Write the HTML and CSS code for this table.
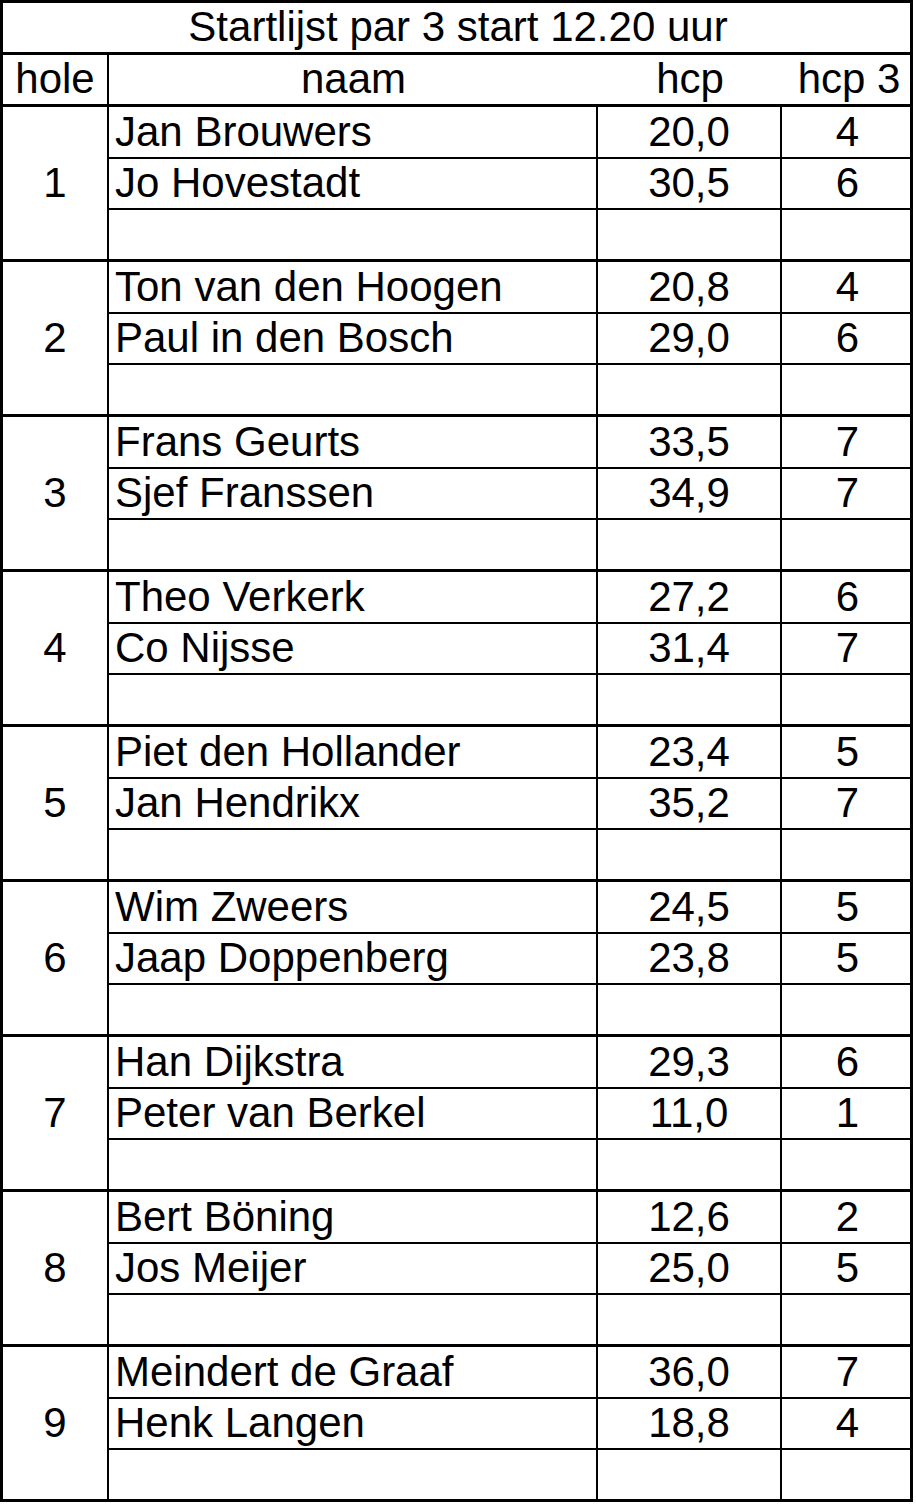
FILE: index.html
```html
<!DOCTYPE html>
<html lang="nl">
<head>
<meta charset="utf-8">
<title>Startlijst par 3</title>
<link rel="stylesheet" href="styles.css">
</head>
<body>
<div class="sheet">
  <div class="title"><span>Startlijst par 3 start 12.20 uur</span></div>
  <div class="head">
    <div class="hc hole-h">hole</div>
    <div class="hc">naam</div>
    <div class="hc">hcp</div>
    <div class="hc">hcp 3</div>
  </div>

  <div class="group">
    <div class="hole">1</div>
    <div class="c name r1">Jan Brouwers</div><div class="c num vr r1">20,0</div><div class="c num3 r1">4</div>
    <div class="c name r2">Jo Hovestadt</div><div class="c num vr r2">30,5</div><div class="c num3 r2">6</div>
    <div class="c name r3"></div><div class="c num vr r3"></div><div class="c num3 r3"></div>
  </div>

  <div class="group">
    <div class="hole">2</div>
    <div class="c name r1">Ton van den Hoogen</div><div class="c num vr r1">20,8</div><div class="c num3 r1">4</div>
    <div class="c name r2">Paul in den Bosch</div><div class="c num vr r2">29,0</div><div class="c num3 r2">6</div>
    <div class="c name r3"></div><div class="c num vr r3"></div><div class="c num3 r3"></div>
  </div>

  <div class="group">
    <div class="hole">3</div>
    <div class="c name r1">Frans Geurts</div><div class="c num vr r1">33,5</div><div class="c num3 r1">7</div>
    <div class="c name r2">Sjef Franssen</div><div class="c num vr r2">34,9</div><div class="c num3 r2">7</div>
    <div class="c name r3"></div><div class="c num vr r3"></div><div class="c num3 r3"></div>
  </div>

  <div class="group">
    <div class="hole">4</div>
    <div class="c name r1">Theo Verkerk</div><div class="c num vr r1">27,2</div><div class="c num3 r1">6</div>
    <div class="c name r2">Co Nijsse</div><div class="c num vr r2">31,4</div><div class="c num3 r2">7</div>
    <div class="c name r3"></div><div class="c num vr r3"></div><div class="c num3 r3"></div>
  </div>

  <div class="group">
    <div class="hole">5</div>
    <div class="c name r1">Piet den Hollander</div><div class="c num vr r1">23,4</div><div class="c num3 r1">5</div>
    <div class="c name r2">Jan Hendrikx</div><div class="c num vr r2">35,2</div><div class="c num3 r2">7</div>
    <div class="c name r3"></div><div class="c num vr r3"></div><div class="c num3 r3"></div>
  </div>

  <div class="group">
    <div class="hole">6</div>
    <div class="c name r1">Wim Zweers</div><div class="c num vr r1">24,5</div><div class="c num3 r1">5</div>
    <div class="c name r2">Jaap Doppenberg</div><div class="c num vr r2">23,8</div><div class="c num3 r2">5</div>
    <div class="c name r3"></div><div class="c num vr r3"></div><div class="c num3 r3"></div>
  </div>

  <div class="group">
    <div class="hole">7</div>
    <div class="c name r1">Han Dijkstra</div><div class="c num vr r1">29,3</div><div class="c num3 r1">6</div>
    <div class="c name r2">Peter van Berkel</div><div class="c num vr r2">11,0</div><div class="c num3 r2">1</div>
    <div class="c name r3"></div><div class="c num vr r3"></div><div class="c num3 r3"></div>
  </div>

  <div class="group">
    <div class="hole">8</div>
    <div class="c name r1">Bert Böning</div><div class="c num vr r1">12,6</div><div class="c num3 r1">2</div>
    <div class="c name r2">Jos Meijer</div><div class="c num vr r2">25,0</div><div class="c num3 r2">5</div>
    <div class="c name r3"></div><div class="c num vr r3"></div><div class="c num3 r3"></div>
  </div>

  <div class="group">
    <div class="hole">9</div>
    <div class="c name r1">Meindert de Graaf</div><div class="c num vr r1">36,0</div><div class="c num3 r1">7</div>
    <div class="c name r2">Henk Langen</div><div class="c num vr r2">18,8</div><div class="c num3 r2">4</div>
    <div class="c name r3"></div><div class="c num vr r3"></div><div class="c num3 r3"></div>
  </div>
</div>
</body>
</html>
```

FILE: styles.css
```css
html, body {
  margin: 0;
  padding: 0;
  background: #fff;
}

body {
  font-family: "Liberation Sans", Arial, sans-serif;
  font-size: 42px;
  line-height: normal;
  color: #000;
}

* {
  box-sizing: border-box;
}

.sheet {
  width: 913px;
  border: 3px solid #000;
}

.title {
  height: 52px;
  border-bottom: 3px solid #000;
  display: flex;
  align-items: flex-end;
  justify-content: center;
  padding-bottom: 1px;
  padding-left: 3px;
  white-space: nowrap;
}

.head {
  display: grid;
  grid-template-columns: 106px 489px 184px 128px;
  height: 52px;
  border-bottom: 3px solid #000;
}

.hc {
  display: flex;
  align-items: flex-end;
  justify-content: center;
  padding-bottom: 1px;
  white-space: nowrap;
}

.hc:last-child {
  padding-left: 6px;
}

.hole-h {
  border-right: 2px solid #000;
}

.group {
  display: grid;
  grid-template-columns: 106px 489px 184px 128px;
  grid-template-rows: 52px 51px 49px;
  border-bottom: 3px solid #000;
}

.group:last-child {
  border-bottom: none;
}

.hole {
  grid-row: 1 / 4;
  grid-column: 1;
  border-right: 2px solid #000;
  display: flex;
  align-items: center;
  justify-content: center;
}

.c {
  display: flex;
  align-items: flex-end;
  padding-bottom: 1px;
  white-space: nowrap;
}

.r1, .r2 {
  border-bottom: 2px solid #000;
}

.name {
  grid-column: 2;
  border-right: 2px solid #000;
  padding-left: 6px;
}

.num {
  grid-column: 3;
  justify-content: center;
}

.vr {
  border-right: 2px solid #000;
}

.num3 {
  grid-column: 4;
  justify-content: center;
  padding-left: 3px;
}
```
